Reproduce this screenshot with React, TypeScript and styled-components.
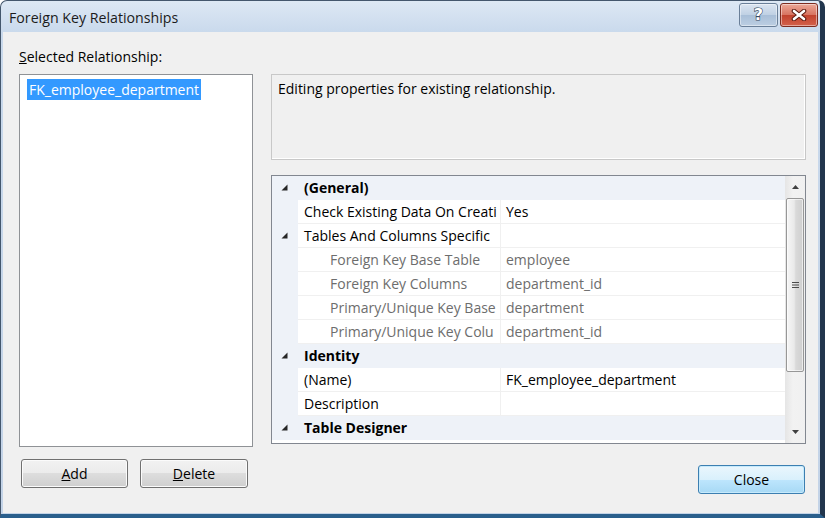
import React from 'react';
import styled, { createGlobalStyle } from 'styled-components';

const Global = createGlobalStyle`
  html, body { margin: 0; padding: 0; background: #ffffff; }
  body {
    font-family: "Open Sans", "Noto Sans", "DejaVu Sans", sans-serif;
    font-size: 14px;
    color: #000;
  }
  * { box-sizing: border-box; }
`;

const Window = styled.div`
  width: 825px;
  height: 518px;
  display: flex;
  flex-direction: column;
  background: linear-gradient(#dde8f4, #c9d9ec 32px, #c3d3e7);
  border: 1px solid #44576d;
  border-right: 5px solid #22364d;
  border-bottom: 4px solid #2a5f8c;
  border-radius: 7px 7px 0 0;
  overflow: hidden;
`;

const TitleBar = styled.div`
  height: 31px;
  display: flex;
  align-items: flex-start;
  padding-left: 8px;
  flex: none;
`;

const Title = styled.div`
  margin-top: 7px;
  line-height: 20px;
  font-size: 14.2px;
  color: #1b1b1b;
`;

const Captions = styled.div`
  margin-left: auto;
  margin-right: 2px;
  margin-top: 2px;
  display: flex;
  gap: 2px;
`;

const CaptionButton = styled.div<{ $kind: 'help' | 'close' }>`
  width: ${(p) => (p.$kind === 'help' ? 39 : 38)}px;
  height: 24px;
  border-radius: 3px;
  display: flex;
  align-items: center;
  justify-content: center;
  border: 1px solid ${(p) => (p.$kind === 'help' ? '#6a7f98' : '#7c2b1f')};
  background: ${(p) =>
    p.$kind === 'help'
      ? 'linear-gradient(#dbe5f1, #c0d1e4 48%, #a9bfd8 52%, #bccee2)'
      : 'linear-gradient(#eba897, #d87562 48%, #c2432e 52%, #d3614b)'};
  box-shadow: inset 0 0 0 1px rgba(255, 255, 255, 0.45);
`;

const HelpGlyph = styled.span`
  font-family: "DejaVu Sans", sans-serif;
  font-weight: bold;
  font-size: 16px;
  line-height: 1;
  color: #ffffff;
  -webkit-text-stroke: 1.2px #34465c;
  paint-order: stroke fill;
`;

const Client = styled.div`
  flex: 1;
  margin: 0 2px 1px 2px;
  background: #f0f0f0;
  display: grid;
  grid-template-columns: 234px 535px;
  column-gap: 18px;
  padding-left: 16px;
`;

const LeftColumn = styled.div`
  display: flex;
  flex-direction: column;
`;

const Label = styled.div`
  margin-top: 15px;
  line-height: 20px;
  color: #000;
`;

const ListBox = styled.div`
  margin-top: 7px;
  height: 373px;
  background: #ffffff;
  border: 1px solid #8f9296;
  padding: 4px 0 0 7px;
`;

const SelectedItem = styled.span`
  display: inline-block;
  height: 21px;
  line-height: 21px;
  padding: 0 2px;
  background: #3399ff;
  color: #ffffff;
`;

const ButtonRow = styled.div`
  margin-top: 12px;
  margin-left: 2px;
  display: flex;
  gap: 12px;
`;

const Button = styled.div<{ $w: number; $default?: boolean }>`
  width: ${(p) => p.$w}px;
  height: 29px;
  border-radius: 3px;
  display: flex;
  align-items: center;
  justify-content: center;
  color: #000;
  border: 1px solid ${(p) => (p.$default ? '#3c7fb1' : '#707070')};
  background: ${(p) =>
    p.$default
      ? 'linear-gradient(#eaf6fd, #d9f0fc 50%, #bee6fd 50%, #a7d9f5)'
      : 'linear-gradient(#f2f2f2, #ebebeb 50%, #dddddd 50%, #cfcfcf)'};
  box-shadow: inset 0 0 0 1px ${(p) => (p.$default ? '#c6eafc' : '#fbfbfb')};
`;

const RightColumn = styled.div`
  display: flex;
  flex-direction: column;
  padding-top: 42px;
`;

const DescBox = styled.div`
  height: 86px;
  border: 1px solid #c8c8c8;
  box-shadow: inset -1px -1px 0 #ffffff;
  padding: 4px 6px;
  line-height: 20px;
`;

const Grid = styled.div`
  margin-top: 15px;
  height: 269px;
  border: 1px solid #828790;
  background: #ffffff;
  display: flex;
`;

const Rows = styled.div`
  width: 513px;
  display: flex;
  flex-direction: column;
  background: #ffffff;
`;

const Row = styled.div<{ $cat?: boolean }>`
  height: 24px;
  display: flex;
  background: ${(p) => (p.$cat ? '#eef2f8' : '#ffffff')};
`;

const Gutter = styled.div`
  width: 26px;
  flex: none;
  background: #eef2f8;
  display: flex;
  align-items: center;
  padding-left: 9px;
  padding-bottom: 1px;
`;

const NameCell = styled.div<{ $level: number; $dim?: boolean; $bold?: boolean; $cat?: boolean }>`
  width: ${(p) => (p.$cat ? 'auto' : '203px')};
  flex: ${(p) => (p.$cat ? '1' : 'none')};
  padding-left: ${(p) => (p.$level === 2 ? 32 : 6)}px;
  border-right: ${(p) => (p.$cat ? 'none' : '1px solid #f0f0f0')};
  border-bottom: ${(p) => (p.$cat ? 'none' : '1px solid #f0f0f0')};
  line-height: 23px;
  white-space: nowrap;
  overflow: hidden;
  font-weight: ${(p) => (p.$bold ? 700 : 400)};
  color: ${(p) => (p.$dim ? '#6d6d6d' : '#000')};
`;

const ValueCell = styled.div<{ $dim?: boolean }>`
  flex: 1;
  padding-left: 5px;
  border-bottom: 1px solid #f0f0f0;
  line-height: 23px;
  white-space: nowrap;
  overflow: hidden;
  color: ${(p) => (p.$dim ? '#6d6d6d' : '#000')};
`;

const ScrollBar = styled.div`
  width: 20px;
  display: flex;
  flex-direction: column;
  background: linear-gradient(90deg, #e5e5e5, #f2f2f2 40%, #f0f0f0);
`;

const ArrowButton = styled.div`
  height: 22px;
  display: flex;
  align-items: center;
  justify-content: center;
  flex: none;
`;

const Thumb = styled.div`
  height: 174px;
  margin: 0 1px;
  border: 1px solid #979797;
  border-radius: 2px;
  background: linear-gradient(90deg, #f6f6f6, #e9e9e9 45%, #d9d9d9 55%, #cfcfcf);
  box-shadow: inset 0 0 0 1px rgba(255, 255, 255, 0.6);
  display: flex;
  align-items: center;
  justify-content: center;
`;

const Track = styled.div`
  flex: 1;
`;

const CloseRow = styled.div`
  margin-top: 21px;
  margin-right: 1px;
  display: flex;
  justify-content: flex-end;
`;

const Expander = () => (
  <svg width="7" height="7" viewBox="0 0 7 7">
    <polygon points="6.5,0.5 6.5,6.5 0.5,6.5" fill="#262626" />
  </svg>
);

const Arrow = ({ down }: { down?: boolean }) => (
  <svg width="7" height="4" viewBox="0 0 7 4">
    <polygon points={down ? '0,0 7,0 3.5,4' : '0,4 7,4 3.5,0'} fill="#404040" />
  </svg>
);

const Grip = () => (
  <svg width="7" height="7" viewBox="0 0 7 7">
    {[0.5, 3, 5.5].map((y) => (
      <line key={y} x1="0" x2="7" y1={y} y2={y} stroke="#4a4a4a" strokeWidth="1" />
    ))}
  </svg>
);

const CloseX = () => (
  <svg width="16" height="12" viewBox="0 0 16 12">
    <path d="M3 2 L13 10 M13 2 L3 10" stroke="#5a1a10" strokeWidth="4.6" strokeLinecap="round" />
    <path d="M3 2 L13 10 M13 2 L3 10" stroke="#ffffff" strokeWidth="2.6" strokeLinecap="round" />
  </svg>
);

type RowData =
  | { kind: 'cat'; label: string }
  | { kind: 'prop'; name: string; value?: string; level: number; dim?: boolean; expand?: boolean };

const rows: RowData[] = [
  { kind: 'cat', label: '(General)' },
  { kind: 'prop', name: 'Check Existing Data On Creati', value: 'Yes', level: 1 },
  { kind: 'prop', name: 'Tables And Columns Specific', value: '', level: 1, expand: true },
  { kind: 'prop', name: 'Foreign Key Base Table', value: 'employee', level: 2, dim: true },
  { kind: 'prop', name: 'Foreign Key Columns', value: 'department_id', level: 2, dim: true },
  { kind: 'prop', name: 'Primary/Unique Key Base', value: 'department', level: 2, dim: true },
  { kind: 'prop', name: 'Primary/Unique Key Colu', value: 'department_id', level: 2, dim: true },
  { kind: 'cat', label: 'Identity' },
  { kind: 'prop', name: '(Name)', value: 'FK_employee_department', level: 1 },
  { kind: 'prop', name: 'Description', value: '', level: 1 },
  { kind: 'cat', label: 'Table Designer' },
];

export default function App() {
  return (
    <>
      <Global />
      <Window>
        <TitleBar>
          <Title>Foreign Key Relationships</Title>
          <Captions>
            <CaptionButton $kind="help">
              <HelpGlyph>?</HelpGlyph>
            </CaptionButton>
            <CaptionButton $kind="close">
              <CloseX />
            </CaptionButton>
          </Captions>
        </TitleBar>
        <Client>
          <LeftColumn>
            <Label>
              <u>S</u>elected Relationship:
            </Label>
            <ListBox>
              <SelectedItem>FK_employee_department</SelectedItem>
            </ListBox>
            <ButtonRow>
              <Button $w={107}>
                <span>
                  <u>A</u>dd
                </span>
              </Button>
              <Button $w={108}>
                <span>
                  <u>D</u>elete
                </span>
              </Button>
            </ButtonRow>
          </LeftColumn>
          <RightColumn>
            <DescBox>Editing properties for existing relationship.</DescBox>
            <Grid>
              <Rows>
                {rows.map((r, i) =>
                  r.kind === 'cat' ? (
                    <Row key={i} $cat>
                      <Gutter>
                        <Expander />
                      </Gutter>
                      <NameCell $level={1} $bold $cat>
                        {r.label}
                      </NameCell>
                    </Row>
                  ) : (
                    <Row key={i}>
                      <Gutter>{r.expand ? <Expander /> : null}</Gutter>
                      <NameCell $level={r.level} $dim={r.dim}>
                        {r.name}
                      </NameCell>
                      <ValueCell $dim={r.dim}>{r.value}</ValueCell>
                    </Row>
                  )
                )}
              </Rows>
              <ScrollBar>
                <ArrowButton>
                  <Arrow />
                </ArrowButton>
                <Thumb>
                  <Grip />
                </Thumb>
                <Track />
                <ArrowButton>
                  <Arrow down />
                </ArrowButton>
              </ScrollBar>
            </Grid>
            <CloseRow>
              <Button $w={107} $default>
                Close
              </Button>
            </CloseRow>
          </RightColumn>
        </Client>
      </Window>
    </>
  );
}
